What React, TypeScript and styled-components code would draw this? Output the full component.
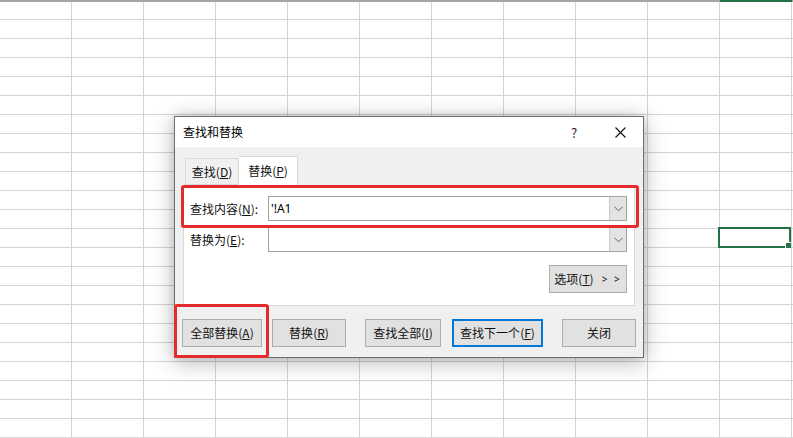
import React from "react";
import styled, { createGlobalStyle } from "styled-components";

const Global = createGlobalStyle`
  html, body { margin: 0; padding: 0; background: #ffffff; }
  body { width: 793px; height: 438px; overflow: hidden; }
  #root { width: 793px; height: 438px; }
`;

const FONT = `"Noto Sans CJK SC", "Noto Sans", sans-serif`;

const Page = styled.div`
  position: relative;
  width: 793px;
  height: 438px;
  overflow: hidden;
  background: #fff;
  font-family: ${FONT};
`;

const Sheet = styled.div`
  display: flex;
  flex-direction: column;
`;

const HeaderEdge = styled.div`
  display: grid;
  grid-template-columns: repeat(12, 72px);
  height: 2px;
`;

const EdgeSeg = styled.div<{ $active?: boolean }>`
  background: ${(p) => (p.$active ? "#217346" : "#a6a6a6")};
`;

const Grid = styled.div`
  display: grid;
  grid-template-columns: repeat(12, 72px);
  grid-template-rows: 18px;
  grid-auto-rows: 19px;
`;

const Cell = styled.div`
  position: relative;
  box-sizing: border-box;
  border-right: 1px solid #d4d4d4;
  border-bottom: 1px solid #d4d4d4;
`;

const Selection = styled.div`
  position: absolute;
  left: -2px;
  top: -2px;
  right: 0;
  bottom: -1px;
  border: 2px solid #217346;
  box-sizing: border-box;
  z-index: 1;
`;

const FillHandle = styled.div`
  position: absolute;
  right: -2px;
  bottom: -2px;
  width: 5px;
  height: 5px;
  background: #217346;
  border-left: 1px solid #fff;
  border-top: 1px solid #fff;
`;

const Dialog = styled.div`
  position: absolute;
  left: 174px;
  top: 116px;
  width: 470px;
  height: 242px;
  box-sizing: border-box;
  border: 1px solid #6e6e6e;
  background: #f0f0f0;
  box-shadow: 0 4px 22px rgba(0, 0, 0, 0.28), 0 0 8px rgba(0, 0, 0, 0.12);
  display: flex;
  flex-direction: column;
  z-index: 5;
  color: #111;
  font-size: 12px;
`;

const TitleBar = styled.div`
  height: 30px;
  background: #ffffff;
  display: flex;
  align-items: center;
  padding-left: 8px;
`;

const Title = styled.div`
  flex: 1;
  font-size: 12px;
  line-height: 16px;
  color: #000;
`;

const TitleButton = styled.div`
  width: 46px;
  height: 30px;
  display: flex;
  align-items: center;
  justify-content: center;
  font-size: 13px;
  color: #222;
`;

const Body = styled.div`
  flex: 1;
  display: flex;
  flex-direction: column;
  padding: 9px 8px 0 8px;
`;

const TabStrip = styled.div`
  display: flex;
  align-items: flex-end;
  height: 29px;
  padding-left: 2px;
  position: relative;
  z-index: 1;
`;

const Tab = styled.div<{ $selected?: boolean; $w: number }>`
  box-sizing: border-box;
  width: ${(p) => p.$w}px;
  height: ${(p) => (p.$selected ? 30 : 27)}px;
  margin-bottom: ${(p) => (p.$selected ? -1 : 0)}px;
  background: ${(p) => (p.$selected ? "#ffffff" : "#f0f0f0")};
  border: 1px solid #d9d9d9;
  border-bottom: ${(p) => (p.$selected ? "none" : "1px solid #d9d9d9")};
  border-left: ${(p) => (p.$selected ? "none" : "1px solid #d9d9d9")};
  display: flex;
  align-items: center;
  justify-content: center;
  font-size: 12px;
  line-height: 16px;
  padding-bottom: ${(p) => (p.$selected ? 1 : 0)}px;
`;

const Panel = styled.div`
  box-sizing: border-box;
  width: 452px;
  height: 121px;
  background: #ffffff;
  border: 1px solid #d9d9d9;
  padding: 10px 7px 0 6px;
  display: flex;
  flex-direction: column;
  gap: 6px;
`;

const FieldRow = styled.div`
  display: grid;
  grid-template-columns: 78px 1fr;
  align-items: center;
  height: 25px;
`;

const Label = styled.div`
  font-size: 12px;
  line-height: 16px;
  white-space: nowrap;
  color: #111;
`;

const ComboBox = styled.div`
  box-sizing: border-box;
  height: 25px;
  border: 1px solid #a3a3a3;
  background: #fff;
  display: flex;
  align-items: stretch;
`;

const ComboText = styled.div`
  flex: 1;
  padding-left: 2px;
  display: flex;
  align-items: center;
  font-size: 12px;
  font-family: "Noto Sans", "Noto Sans CJK SC", sans-serif;
  color: #000;
`;

const ComboArrow = styled.div`
  width: 16px;
  background: #e3e3e3;
  border-left: 1px solid #c9c9c9;
  display: flex;
  align-items: center;
  justify-content: center;
`;

const OptionsRow = styled.div`
  display: flex;
  justify-content: flex-end;
  margin-top: 7px;
`;

const Btn = styled.div<{ $w: number; $ml?: number; $default?: boolean }>`
  box-sizing: border-box;
  flex-shrink: 0;
  width: ${(p) => p.$w}px;
  height: 28px;
  margin-left: ${(p) => p.$ml ?? 0}px;
  background: #e1e1e1;
  border: ${(p) => (p.$default ? "2px solid #0078d7" : "1px solid #adadad")};
  display: flex;
  align-items: center;
  justify-content: center;
  font-size: 12px;
  line-height: 16px;
  white-space: nowrap;
  color: #111;
`;

const ButtonRow = styled.div`
  display: flex;
  margin-top: 13px;
  margin-left: -1px;
  margin-right: -2px;
`;

const Gt = styled.span`
  margin-left: 8px;
  letter-spacing: 2px;
  font-family: "Noto Sans", sans-serif;
  font-size: 10px;
`;

const Highlight = styled.div<{ $l: number; $t: number; $w: number; $h: number }>`
  position: absolute;
  left: ${(p) => p.$l}px;
  top: ${(p) => p.$t}px;
  width: ${(p) => p.$w}px;
  height: ${(p) => p.$h}px;
  box-sizing: border-box;
  border: 3px solid #e42a2b;
  border-radius: 3px;
  pointer-events: none;
  z-index: 3;
`;

const Chevron = () => (
  <svg width="9" height="6" viewBox="0 0 9 6">
    <polyline points="0.5,0.8 4.5,4.8 8.5,0.8" fill="none" stroke="#606060" strokeWidth="1" />
  </svg>
);

const CloseIcon = () => (
  <svg width="11" height="11" viewBox="0 0 11 11">
    <path d="M0.5 0.5 L10.5 10.5 M10.5 0.5 L0.5 10.5" stroke="#111" strokeWidth="1.1" fill="none" />
  </svg>
);

const Key = ({ k }: { k: string }) => (
  <>
    (<u>{k}</u>)
  </>
);

export default function App() {
  const rows = 23;
  const cols = 12;
  return (
    <Page>
      <Global />
      <Sheet>
        <HeaderEdge>
          {Array.from({ length: cols }).map((_, i) => (
            <EdgeSeg key={i} $active={i === 10} />
          ))}
        </HeaderEdge>
        <Grid>
          {Array.from({ length: rows * cols }).map((_, i) => {
            const r = Math.floor(i / cols);
            const c = i % cols;
            const sel = r === 12 && c === 10;
            return (
              <Cell key={i}>
                {sel && (
                  <Selection>
                    <FillHandle />
                  </Selection>
                )}
              </Cell>
            );
          })}
        </Grid>
      </Sheet>

      <Dialog>
        <TitleBar>
          <Title>查找和替换</Title>
          <TitleButton>?</TitleButton>
          <TitleButton>
            <CloseIcon />
          </TitleButton>
        </TitleBar>
        <Body>
          <TabStrip>
            <Tab $w={54}>
              查找<Key k="D" />
            </Tab>
            <Tab $w={59} $selected>
              替换<Key k="P" />
            </Tab>
          </TabStrip>
          <Panel>
            <FieldRow>
              <Label>
                查找内容<Key k="N" />:
              </Label>
              <ComboBox>
                <ComboText>'!A1</ComboText>
                <ComboArrow>
                  <Chevron />
                </ComboArrow>
              </ComboBox>
            </FieldRow>
            <FieldRow>
              <Label>
                替换为<Key k="E" />:
              </Label>
              <ComboBox>
                <ComboText />
                <ComboArrow>
                  <Chevron />
                </ComboArrow>
              </ComboBox>
            </FieldRow>
            <OptionsRow>
              <Btn $w={78}>
                选项<Key k="T" />
                <Gt>&gt; &gt;</Gt>
              </Btn>
            </OptionsRow>
          </Panel>
          <ButtonRow>
            <Btn $w={80}>
              全部替换<Key k="A" />
            </Btn>
            <Btn $w={74} $ml={10}>
              替换<Key k="R" />
            </Btn>
            <Btn $w={76} $ml={19}>
              查找全部<Key k="I" />
            </Btn>
            <Btn $w={91} $ml={11} $default>
              查找下一个<Key k="F" />
            </Btn>
            <Btn $w={74} $ml={19}>
              关闭
            </Btn>
          </ButtonRow>
        </Body>
        <Highlight $l={6} $t={68} $w={458} $h={43} />
        <Highlight $l={-1} $t={187} $w={95} $h={54} />
      </Dialog>
    </Page>
  );
}
